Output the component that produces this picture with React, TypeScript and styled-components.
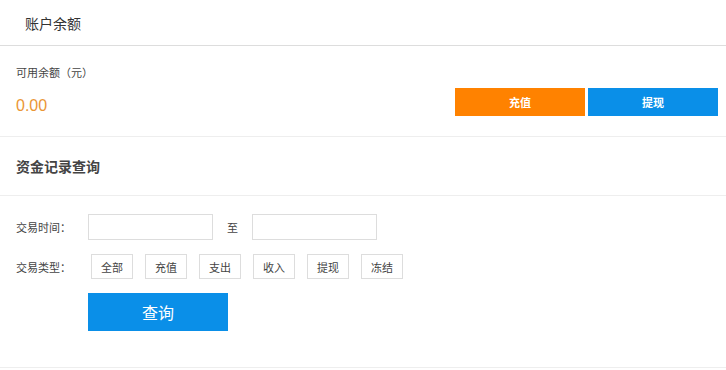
import React, { useState } from 'react';
import styled, { createGlobalStyle } from 'styled-components';

const GlobalStyle = createGlobalStyle`
  html, body {
    margin: 0;
    padding: 0;
    background: #ffffff;
  }
  body {
    font-family: "Noto Sans CJK SC", "Liberation Sans", sans-serif;
    color: #333;
  }
  * {
    box-sizing: border-box;
  }
`;

const Page = styled.div`
  width: 726px;
  background: #fff;
`;

const Header = styled.header`
  height: 46px;
  padding-left: 25px;
  display: flex;
  align-items: center;
  font-size: 14px;
  color: #333;
  border-bottom: 1px solid #dddddd;
`;

const BalanceSection = styled.section`
  height: 91px;
  display: flex;
  justify-content: space-between;
  align-items: flex-end;
  padding: 0 8px 20px 16px;
  border-bottom: 1px solid #eeeeee;
`;

const BalanceInfo = styled.div`
  display: flex;
  flex-direction: column;
  gap: 16px;
`;

const BalanceLabel = styled.div`
  font-size: 11px;
  line-height: 16px;
  color: #444;
`;

const Amount = styled.div`
  font-size: 16px;
  line-height: 20px;
  color: #ea9636;
  font-family: "Liberation Sans", "Noto Sans CJK SC", sans-serif;
`;

const ActionGroup = styled.div`
  display: flex;
  gap: 3px;
`;

const ActionButton = styled.button<{ $tone: 'orange' | 'blue' }>`
  width: 130px;
  height: 28px;
  border: none;
  padding: 0;
  font-family: inherit;
  font-size: 11px;
  font-weight: 700;
  color: #fff;
  cursor: pointer;
  background: ${p => (p.$tone === 'orange' ? '#ff8200' : '#0a8fe8')};
`;

const TitleBar = styled.div`
  height: 59px;
  padding-left: 16px;
  display: flex;
  align-items: center;
  font-size: 14px;
  font-weight: 700;
  color: #444;
  border-bottom: 1px solid #eeeeee;
`;

const FormSection = styled.section`
  padding: 18px 16px 36px;
  display: flex;
  flex-direction: column;
  gap: 14px;
  border-bottom: 1px solid #eeeeee;
`;

const FormRow = styled.div`
  display: flex;
  align-items: center;
`;

const FieldLabel = styled.span`
  width: 72px;
  font-size: 11px;
  color: #444;
`;

const DateInput = styled.input`
  width: 125px;
  height: 26px;
  border: 1px solid #dddddd;
  padding: 0 6px;
  font-size: 11px;
  outline: none;
`;

const Separator = styled.span`
  margin: 0 14px;
  font-size: 11px;
  color: #444;
`;

const TypeGroup = styled.div`
  display: flex;
  gap: 12px;
  padding-left: 3px;
`;

const TypeButton = styled.button<{ $active?: boolean }>`
  width: 42px;
  height: 25px;
  padding: 0;
  background: #fff;
  border: 1px solid ${p => (p.$active ? '#0a8fe8' : '#dddddd')};
  font-family: inherit;
  font-size: 11px;
  color: #444;
  cursor: pointer;
`;

const SubmitRow = styled.div`
  padding-left: 72px;
`;

const SubmitButton = styled.button`
  width: 140px;
  height: 38px;
  border: none;
  padding: 0;
  background: #0a8fe8;
  color: #fff;
  font-family: inherit;
  font-size: 16px;
  cursor: pointer;
`;

const TYPES = ['全部', '充值', '支出', '收入', '提现', '冻结'];

const App: React.FC = () => {
  const [start, setStart] = useState('');
  const [end, setEnd] = useState('');
  const [type, setType] = useState<string | null>(null);

  return (
    <Page>
      <GlobalStyle />
      <Header>账户余额</Header>

      <BalanceSection>
        <BalanceInfo>
          <BalanceLabel>可用余额（元）</BalanceLabel>
          <Amount>0.00</Amount>
        </BalanceInfo>
        <ActionGroup>
          <ActionButton $tone="orange">充值</ActionButton>
          <ActionButton $tone="blue">提现</ActionButton>
        </ActionGroup>
      </BalanceSection>

      <TitleBar>资金记录查询</TitleBar>

      <FormSection>
        <FormRow>
          <FieldLabel>交易时间：</FieldLabel>
          <DateInput value={start} onChange={e => setStart(e.target.value)} />
          <Separator>至</Separator>
          <DateInput value={end} onChange={e => setEnd(e.target.value)} />
        </FormRow>
        <FormRow>
          <FieldLabel>交易类型：</FieldLabel>
          <TypeGroup>
            {TYPES.map(t => (
              <TypeButton key={t} $active={type === t} onClick={() => setType(t)}>
                {t}
              </TypeButton>
            ))}
          </TypeGroup>
        </FormRow>
        <SubmitRow>
          <SubmitButton>查询</SubmitButton>
        </SubmitRow>
      </FormSection>
    </Page>
  );
};

export default App;
